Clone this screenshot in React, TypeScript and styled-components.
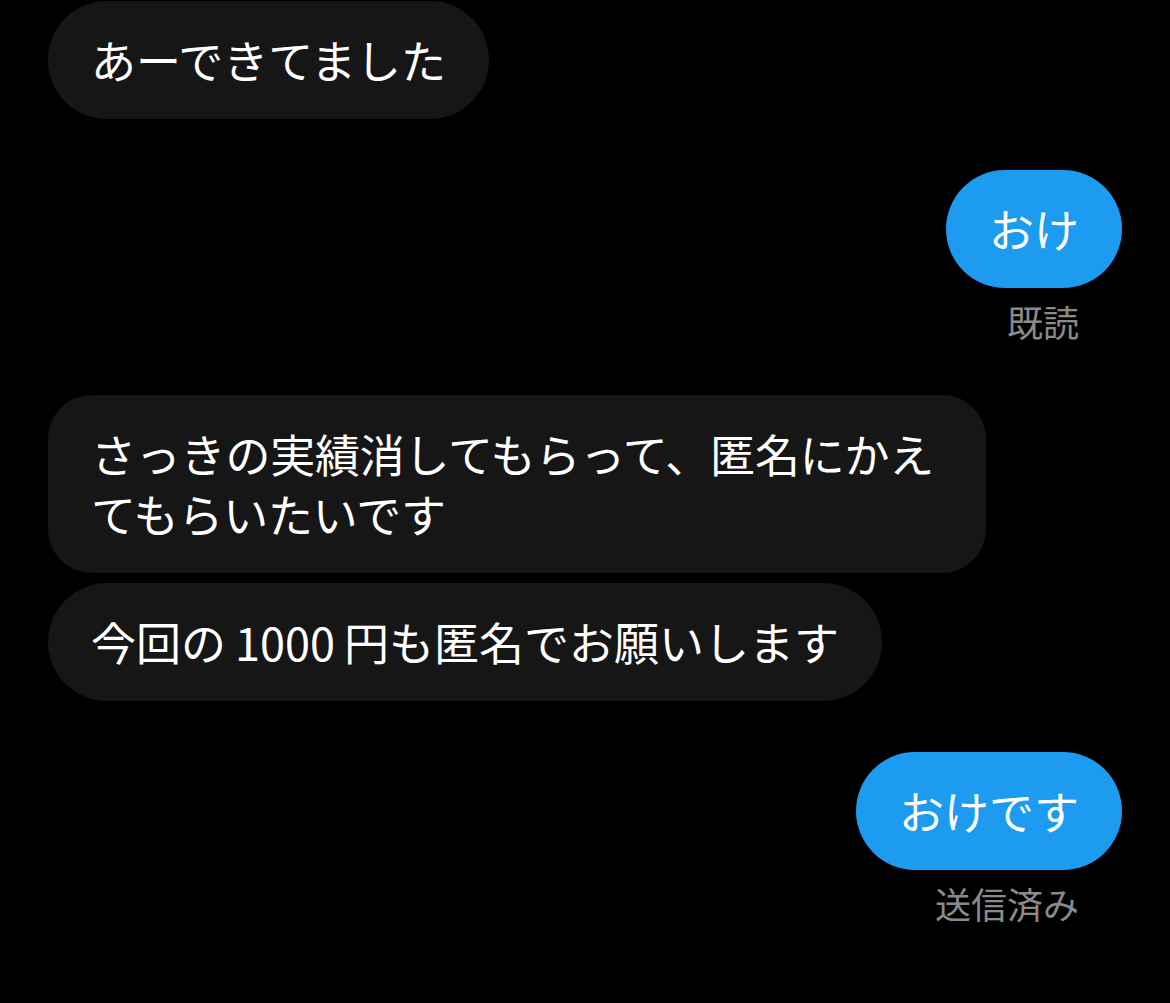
import styled, { createGlobalStyle } from 'styled-components'

const GlobalStyle = createGlobalStyle`
    html, body {
        margin: 0;
        padding: 0;
        background: #000;
    }
    body {
        font-family: "Noto Sans CJK JP", "Noto Sans", sans-serif;
        -webkit-font-smoothing: antialiased;
    }
`

const Thread = styled.div`
    width: 1170px;
    height: 1003px;
    box-sizing: border-box;
    padding: 1px 48px 0;
    display: flex;
    flex-direction: column;
    gap: 51px;
    background: #000;
    overflow: hidden;
`

const Group = styled.div<{ $mine?: boolean }>`
    display: flex;
    flex-direction: column;
    align-items: ${props => (props.$mine ? 'flex-end' : 'flex-start')};
    gap: 10px;
`

const Bubble = styled.div<{ $mine?: boolean }>`
    max-width: 938px;
    box-sizing: border-box;
    padding: 29px 43px;
    border-radius: 59px;
    background: ${props => (props.$mine ? '#1d9bf0' : '#161616')};
    color: #fff;
    font-size: 45px;
    line-height: 60px;
    word-break: break-all;
`

const TallBubble = styled(Bubble)`
    border-radius: 44px;
    letter-spacing: -0.2px;
`

// 数字の前後に少し余白
const Num = styled.span`
    padding: 0 0.2em;
`

const Receipt = styled.div`
    margin-top: 1px;
    padding-right: 43px;
    color: #8a8a8a;
    font-size: 36px;
    line-height: 45px;
`

const App = () => {
    return <>
        <GlobalStyle />
        <Thread>
            <Group>
                <Bubble>あーできてました</Bubble>
            </Group>
            <Group $mine>
                <Bubble $mine>おけ</Bubble>
                <Receipt>既読</Receipt>
            </Group>
            <Group>
                <TallBubble>さっきの実績消してもらって、匿名にかえてもらいたいです</TallBubble>
                <Bubble>今回の<Num>1000</Num>円も匿名でお願いします</Bubble>
            </Group>
            <Group $mine>
                <Bubble $mine>おけです</Bubble>
                <Receipt>送信済み</Receipt>
            </Group>
        </Thread>
    </>
}
export default App
